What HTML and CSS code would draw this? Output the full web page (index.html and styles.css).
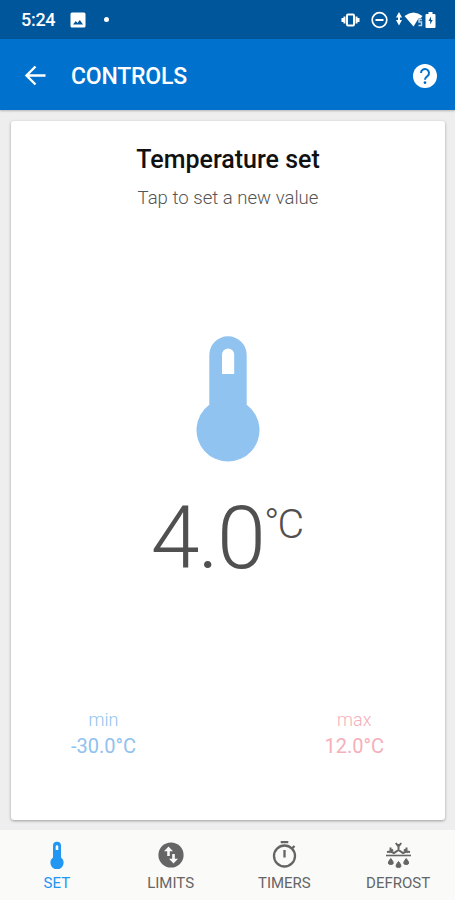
FILE: index.html
```
<!DOCTYPE html>
<html lang="en">
<head>
  <meta charset="UTF-8" />
  <title>Controls</title>
  <meta name="viewport" content="width=device-width, initial-scale=1">
  <link rel="stylesheet" href="styles.css">
</head>
<body>
  <div class="status-bar">
    <span class="clock">5:24</span>
    <svg class="picture" width="16" height="16" viewBox="0 0 16 16">
      <path fill="#fff" fill-rule="evenodd" d="M2 .5h12a1.500 1.500 0 0 1 1.500 1.500v12a1.500 1.500 0 0 1-1.500 1.500H2A1.500 1.500 0 0 1 .5 14V2A1.500 1.500 0 0 1 2 .5zM3 12.500h10L9.800 8l-2.300 3-1.700-2z"/>
    </svg>
    <span class="dot"></span>
    <svg class="status-icons" width="98" height="20" viewBox="0 0 98 20">
      <g fill="none" stroke="#fff">
        <rect x="7" y="4.500" width="7" height="11" rx="1" stroke-width="2"/>
        <path d="M4.500 6.500v7M16.500 6.500v7M2.500 8v4M18.500 8v4" stroke-width="2"/>
        <circle cx="39.500" cy="10" r="7.300" stroke-width="1.700"/>
        <path d="M35.500 10h8" stroke-width="2"/>
      </g>
      <g fill="#fff">
        <path d="M59 2l3 5.500h-6zM59 15.500l-3-5.500h6zM58 6h2v6h-2z"/>
        <path d="M64.500 6q9-7 18 0l-2 2.500h-2l-5 8z"/>
        <path d="M86.500 4h2V2h4v2h2a1 1 0 0 1 1 1v12a1 1 0 0 1-1 1h-8a1 1 0 0 1-1-1V5a1 1 0 0 1 1-1z"/>
      </g>
      <path d="M91 6.500L88.500 11h1.700v3.500l2.500-4.500H91z" fill="#00569a"/>
      <path d="M82 9.500h-3V12h2.500v3.500h-3" fill="none" stroke="#b8d1e5" stroke-width="1.500"/>
    </svg>
  </div>

  <header class="app-bar">
    <svg class="back" width="22" height="22" viewBox="0 0 22 22">
      <path d="M21.500 10.500H2.500M11.500 1.500l-9 9 9 9" fill="none" stroke="#fff" stroke-width="2.400"/>
    </svg>
    <h1>CONTROLS</h1>
    <svg class="help" width="24" height="24" viewBox="0 0 24 24">
      <circle cx="12" cy="12" r="12" fill="#fff"/>
      <path d="M8 9a4 4 0 1 1 6.600 3C13 13.400 12 13.900 12 15.700" fill="none" stroke="#0072ce" stroke-width="2"/>
      <circle cx="12" cy="18.700" r="1.400" fill="#0072ce"/>
    </svg>
  </header>

  <main class="card">
    <h2>Temperature set</h2>
    <p class="hint">Tap to set a new value</p>
    <svg class="thermometer" width="64" height="128" viewBox="0 0 64 128">
      <path fill="#90c3ef" fill-rule="evenodd" d="M13.300 20a18.700 18.700 0 0 1 37.400 0v49.700a31.500 31.500 0 1 1-37.400 0zM26 39h12.200V19.500a6.100 6.100 0 0 0-12.200 0z"/>
    </svg>
    <div class="value">4.0<span class="unit">°C</span></div>
    <div class="range">
      <div class="min"><span>min</span><b>-30.0°C</b></div>
      <div class="max"><span>max</span><b>12.0°C</b></div>
    </div>
  </main>

  <nav class="tabs">
    <a class="tab active">
      <svg width="28" height="28" viewBox="0 0 28 28">
        <path fill="currentColor" fill-rule="evenodd" d="M10 4.800a4 4 0 0 1 8 0v11.700a6.600 6.600 0 1 1-8 0zM12.700 9h2.600V5.500a1.300 1.300 0 0 0-2.600 0z"/>
      </svg>
      <span>SET</span>
    </a>
    <a class="tab">
      <svg width="28" height="28" viewBox="0 0 28 28">
        <circle cx="14" cy="14" r="12.600" fill="currentColor"/>
        <path fill="#fafaf9" d="M11.500 5.500l4.500 4.700h-3.200V15h-2.600v-4.800H7zM16.500 22.500L12 17.800h3.200V13h2.600v4.800H21z"/>
      </svg>
      <span>LIMITS</span>
    </a>
    <a class="tab">
      <svg width="28" height="28" viewBox="0 0 28 28">
        <circle cx="14.500" cy="15" r="10.500" fill="none" stroke="currentColor" stroke-width="2.300"/>
        <path d="M10.700 1.200h7.600M14.500 9v7.500M22 7.500L24.500 5" fill="none" stroke="currentColor" stroke-width="2.300"/>
      </svg>
      <span>TIMERS</span>
    </a>
    <a class="tab">
      <svg width="28" height="28" viewBox="0 0 28 28">
        <path d="M2 14.500h25" stroke="currentColor" stroke-width="1.600"/>
        <path d="M14.500 3v7M11.800 2l2.700 3.500L17.200 2M3 11l3.500-.5M6.500 6.500v4L9 8.500M6.500 10.500L10 12l4.500-3 4.500 3 3.500-1.500M22.500 6.500v4L20 8.500M26 11l-3.500-.5" fill="none" stroke="currentColor" stroke-width="2"/>
        <path d="M6.800 17.500q5 6 0 6t0-6zM14.500 20.500q5 6 0 6t0-6zM22.200 17.500q5 6 0 6t0-6z" fill="currentColor" stroke="currentColor"/>
      </svg>
      <span>DEFROST</span>
    </a>
  </nav>
</body>
</html>
```

FILE: styles.css
```
* {
  box-sizing: border-box;
}
body {
  font-family: Roboto, sans-serif;
  background: #eeeeee;
  margin: 0;
  height: 900px;
  display: flex;
  flex-direction: column;
  overflow: hidden;
}
svg {
  display: block;
  flex: none;
}
.status-bar {
  height: 39px;
  background: #00569a;
  color: #fff;
  display: flex;
  align-items: center;
  padding: 0 17px 0 21px;
}
.clock {
  width: 49px;
  font-size: 18px;
  font-weight: 500;
  letter-spacing: -0.3px;
}
.dot {
  width: 5px;
  height: 5px;
  margin-left: 18px;
  border-radius: 50%;
  background: #fff;
}
.status-icons {
  margin-left: auto;
}
.app-bar {
  height: 71px;
  background: #0072ce;
  color: #fff;
  display: flex;
  align-items: center;
  padding: 2px 18px 0 24px;
  box-shadow: 0 1px 2px rgba(0,0,0,0.25);
}
.app-bar h1 {
  margin: 2px 0 0 25px;
  font-size: 23px;
  font-weight: 500;
  letter-spacing: -0.2px;
}
.help {
  margin-left: auto;
}
.card {
  width: 434px;
  height: 699px;
  margin: 11px 0 0 11px;
  background: #fff;
  border-radius: 3px;
  box-shadow: 0 1px 3px rgba(0,0,0,0.35);
  display: flex;
  flex-direction: column;
  align-items: center;
}
.card h2 {
  margin: 24px 0 0;
  font-size: 25px;
  font-weight: 500;
  line-height: 30px;
  color: #111;
}
.hint {
  margin: 11px 0 0;
  font-size: 18.6px;
  font-weight: 300;
  line-height: 24px;
  color: #555;
}
.thermometer {
  margin-top: 125px;
}
.value {
  display: flex;
  align-items: flex-start;
  margin-top: 25px;
  padding-right: 3px;
  font-size: 88px;
  font-weight: 300;
  line-height: 100px;
  letter-spacing: -1.8px;
  color: #505050;
}
.unit {
  font-size: 41px;
  font-weight: 300;
  line-height: 73px;
  letter-spacing: -2px;
}
.range {
  width: 100%;
  margin-top: 119px;
  padding: 0 60px;
  display: flex;
  justify-content: space-between;
  font-size: 20px;
  line-height: 26px;
  text-align: center;
}
.range span, .range b {
  display: block;
  font-weight: 400;
}
.range span {
  font-size: 18px;
  font-weight: 300;
}
.min {
  color: #8fc2ed;
}
.max {
  margin-right: 1px;
  color: #f5b0ba;
}
.tabs {
  height: 70px;
  margin-top: auto;
  background: #fafaf9;
  display: flex;
}
.tab {
  flex: 1;
  display: flex;
  flex-direction: column;
  align-items: center;
  padding-top: 11px;
  font-size: 15px;
  line-height: 20px;
  color: #656565;
}
.tab span {
  margin-top: 4px;
}
.tab.active {
  color: #2196f3;
}
```
